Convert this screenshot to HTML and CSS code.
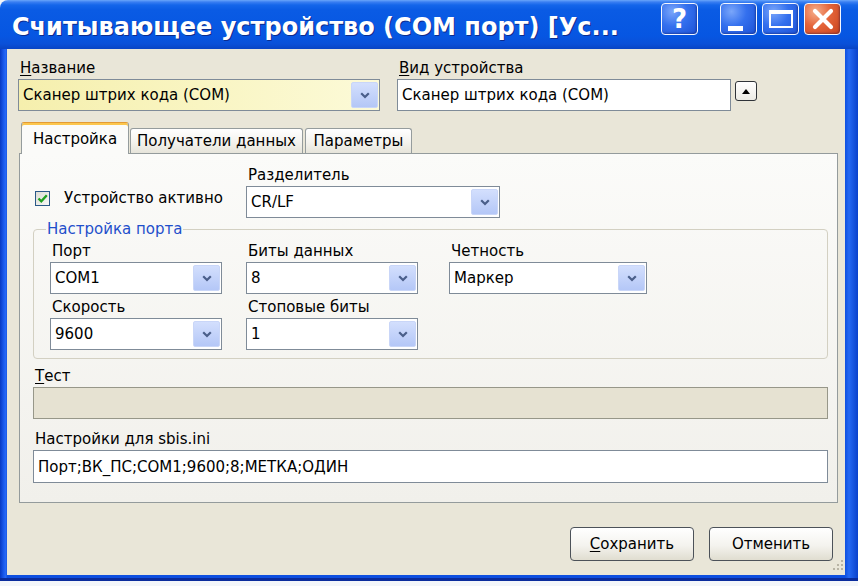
FILE: index.html
```html
<!DOCTYPE html>
<html lang="ru">
<head>
<meta charset="utf-8">
<title>Считывающее устройство (COM порт)</title>
<link rel="stylesheet" href="styles.css">
</head>
<body>
<div class="window">
  <div class="titlebar">
    <div class="title">Считывающее устройство (COM порт) [Ус...</div>
    <div class="caption-buttons">
      <div class="cap-btn help">?</div>
      <div class="cap-btn min"><span class="min-bar"></span></div>
      <div class="cap-btn max"><span class="max-box"></span></div>
      <div class="cap-btn close">
        <svg width="24" height="22" viewBox="0 0 24 22"><path d="M4 3 L20 19 M20 3 L4 19" stroke="#fff" stroke-width="4.2" stroke-linecap="round"/></svg>
      </div>
    </div>
  </div>
  <div class="frame">
    <div class="client">
      <div class="top-row">
        <div class="field name-field">
          <span class="lbl"><u>Н</u>азвание</span>
          <div class="combo yellow">
            <span class="val">Сканер штрих кода (COM)</span>
            <span class="dd"><svg width="10" height="7" viewBox="0 0 10 7"><path d="M1.2 1.2 L5 5 L8.8 1.2" stroke="#4a5f8a" stroke-width="2.2" fill="none"/></svg></span>
          </div>
        </div>
        <div class="field kind-field">
          <span class="lbl"><u>В</u>ид устройства</span>
          <div class="kind-row">
            <div class="textbox kind-box">Сканер штрих кода (COM)</div>
            <div class="mini-btn"><svg width="8" height="5" viewBox="0 0 8 5"><polygon points="0,5 4,0 8,5" fill="#000"/></svg></div>
          </div>
        </div>
      </div>

      <div class="tabs">
        <div class="tab active t1">Настройка</div>
        <div class="tab t2">Получатели данных</div>
        <div class="tab t3">Параметры</div>
      </div>

      <div class="panel">
        <div class="row-a">
          <div class="check">
            <span class="box"><svg width="13" height="13" viewBox="0 0 13 13"><path d="M2.5 6.5 L5.3 9.3 L10.8 3.3" stroke="#21a121" stroke-width="2.4" fill="none"/></svg></span>
            <span>Устройство активно</span>
          </div>
          <div class="field">
            <span class="lbl">Разделитель</span>
            <div class="combo w-sep">
              <span class="val">CR/LF</span>
              <span class="dd"><svg width="10" height="7" viewBox="0 0 10 7"><path d="M1.2 1.2 L5 5 L8.8 1.2" stroke="#4a5f8a" stroke-width="2.2" fill="none"/></svg></span>
            </div>
          </div>
        </div>

        <fieldset class="group">
          <legend>Настройка порта</legend>
          <div class="group-grid">
            <div class="field">
              <span class="lbl">Порт</span>
              <div class="combo w-s">
                <span class="val">COM1</span>
                <span class="dd"><svg width="10" height="7" viewBox="0 0 10 7"><path d="M1.2 1.2 L5 5 L8.8 1.2" stroke="#4a5f8a" stroke-width="2.2" fill="none"/></svg></span>
              </div>
            </div>
            <div class="field">
              <span class="lbl">Биты данных</span>
              <div class="combo w-s">
                <span class="val">8</span>
                <span class="dd"><svg width="10" height="7" viewBox="0 0 10 7"><path d="M1.2 1.2 L5 5 L8.8 1.2" stroke="#4a5f8a" stroke-width="2.2" fill="none"/></svg></span>
              </div>
            </div>
            <div class="field">
              <span class="lbl">Четность</span>
              <div class="combo w-l">
                <span class="val">Маркер</span>
                <span class="dd"><svg width="10" height="7" viewBox="0 0 10 7"><path d="M1.2 1.2 L5 5 L8.8 1.2" stroke="#4a5f8a" stroke-width="2.2" fill="none"/></svg></span>
              </div>
            </div>
            <div class="field">
              <span class="lbl">Скорость</span>
              <div class="combo w-s">
                <span class="val">9600</span>
                <span class="dd"><svg width="10" height="7" viewBox="0 0 10 7"><path d="M1.2 1.2 L5 5 L8.8 1.2" stroke="#4a5f8a" stroke-width="2.2" fill="none"/></svg></span>
              </div>
            </div>
            <div class="field">
              <span class="lbl">Стоповые биты</span>
              <div class="combo w-s">
                <span class="val">1</span>
                <span class="dd"><svg width="10" height="7" viewBox="0 0 10 7"><path d="M1.2 1.2 L5 5 L8.8 1.2" stroke="#4a5f8a" stroke-width="2.2" fill="none"/></svg></span>
              </div>
            </div>
          </div>
        </fieldset>

        <span class="lbl lbl-test"><u>Т</u>ест</span>
        <div class="textbox disabled test-box"></div>

        <span class="lbl lbl-ini">Настройки для sbis.ini</span>
        <div class="textbox ini-box">Порт;ВК_ПС;COM1;9600;8;МЕТКА;ОДИН</div>
      </div>

      <div class="btns">
        <div class="btn"><span><u>С</u>охранить</span></div>
        <div class="btn"><span>Отменить</span></div>
      </div>

      <svg class="grip" width="12" height="12" viewBox="0 0 12 12">
        <rect x="9" y="1" width="2" height="2" fill="#b8b4a4"/>
        <rect x="5" y="5" width="2" height="2" fill="#b8b4a4"/>
        <rect x="9" y="5" width="2" height="2" fill="#b8b4a4"/>
        <rect x="1" y="9" width="2" height="2" fill="#b8b4a4"/>
        <rect x="5" y="9" width="2" height="2" fill="#b8b4a4"/>
        <rect x="9" y="9" width="2" height="2" fill="#b8b4a4"/>
      </svg>
    </div>
  </div>
</div>
</body>
</html>
```

FILE: styles.css
```css
* { box-sizing: border-box; }

html, body {
  margin: 0;
  padding: 0;
  background: #f3f6fa;
}

body {
  font-family: "DejaVu Sans", Tahoma, sans-serif;
  font-size: 15px;
  color: #000;
}

u { text-decoration: underline; text-underline-offset: 2px; }

.window {
  width: 858px;
  height: 581px;
  display: flex;
  flex-direction: column;
  border-top-left-radius: 8px;
  overflow: hidden;
}

/* ---------- title bar ---------- */
.titlebar {
  height: 49px;
  flex: none;
  display: flex;
  align-items: flex-start;
  padding: 0 17px 0 12px;
  background: linear-gradient(to bottom,
    #6aa6fa 0px, #3a7ff2 2px, #1466ea 5px, #0a5be4 10px,
    #0656e2 36px, #0a50d8 44px, #0944c4 49px);
}

.title {
  margin-top: 13px;
  line-height: 28px;
  font-family: "DejaVu Sans", sans-serif;
  font-weight: bold;
  font-size: 24px;
  color: #fff;
  white-space: nowrap;
  text-shadow: 1px 1px 0 #0c2c8e;
}

.caption-buttons {
  margin-left: auto;
  margin-top: 3px;
  display: flex;
  gap: 5px;
}

.cap-btn {
  width: 37px;
  height: 32px;
  border: 1.5px solid #f4f7ff;
  border-radius: 4px;
  display: flex;
  align-items: center;
  justify-content: center;
  background: radial-gradient(circle at 30% 25%, #7aa6fa 0%, #3470ee 45%, #1c52d6 100%);
  box-shadow: inset -1px -1px 2px rgba(0, 10, 70, 0.35);
}

.cap-btn.help {
  margin-right: 17px;
  color: #fff;
  font-weight: bold;
  font-size: 26px;
  line-height: 1;
}

.cap-btn.min {
  justify-content: flex-start;
  align-items: flex-end;
  padding: 0 0 3px 7px;
}

.min-bar {
  width: 15px;
  height: 5px;
  background: #fff;
}

.max-box {
  width: 24px;
  height: 18px;
  border: 2px solid #fff;
  border-top-width: 4px;
}

.cap-btn.close {
  background: radial-gradient(circle at 30% 25%, #f6ae8c 0%, #e4643a 45%, #c8431e 100%);
}

/* ---------- frame ---------- */
.frame {
  flex: 1;
  display: flex;
  padding: 0 13px 6px 7px;
  background: linear-gradient(to right,
    #0638c2 0px, #1a5cf0 4px, #2a6af4 6px, #0d4fe0 7px,
    #0d4fe0 calc(100% - 13px), #2468f2 calc(100% - 9px), #0a42cc 100%);
  box-shadow: inset 0 -3px 0 #0a2c9c;
}

.client {
  flex: 1;
  position: relative;
  display: flex;
  flex-direction: column;
  padding: 9px 7px 0 11px;
  background: #e9e6d8;
}

/* ---------- fields ---------- */
.lbl {
  display: block;
  height: 20px;
  line-height: 20px;
  padding-left: 2px;
  white-space: nowrap;
}

.combo,
.textbox {
  margin-top: 1px;
  height: 32px;
  border: 1px solid #7f8b98;
  background: #fff;
  display: flex;
  align-items: center;
  padding-left: 4px;
  white-space: nowrap;
}

.combo .val { flex: 1; }

.dd {
  flex: none;
  width: 27px;
  height: 26px;
  margin-right: 1px;
  border-radius: 2px;
  border: 1px solid #c9d6f8;
  background: linear-gradient(to bottom, #d3dffd, #b4c7f7);
  display: flex;
  align-items: center;
  justify-content: center;
}

.combo.yellow {
  background: linear-gradient(to right, #f5efad 0%, #f9f5c2 50%, #fcfad8 100%);
}

.top-row {
  display: flex;
  gap: 17px;
}

.name-field { width: 362px; }

.kind-row {
  display: flex;
  align-items: flex-start;
  gap: 4px;
}

.kind-box { width: 334px; }

.mini-btn {
  margin-top: 3px;
  width: 22px;
  height: 20px;
  border: 1px solid #2f3338;
  border-radius: 3px;
  background: linear-gradient(#ffffff, #ecebe4);
  display: flex;
  align-items: center;
  justify-content: center;
}

/* ---------- tabs ---------- */
.tabs {
  margin-top: 11px;
  margin-left: 3px;
  height: 31px;
  display: flex;
  align-items: flex-end;
}

.tab {
  height: 25px;
  display: flex;
  align-items: center;
  justify-content: center;
  white-space: nowrap;
  border: 1px solid #959c9d;
  border-bottom: none;
  border-radius: 3px 3px 0 0;
  background: linear-gradient(to bottom, #ffffff 0%, #f4f3ee 55%, #e6e4da 100%);
}

.tab.active {
  position: relative;
  z-index: 2;
  height: 32px;
  margin-bottom: -1px;
  border-top: 1px solid #e39a34;
  box-shadow: inset 0 2px 0 #fcc64c;
  background: #fbfbf9;
  padding-top: 1px;
}

.t1 { width: 108px; }
.t2 { width: 173px; margin-left: 1px; }
.t3 { width: 107px; margin-left: 2px; }

/* ---------- panel ---------- */
.panel {
  width: 819px;
  margin-left: 1px;
  border: 1px solid #949b9c;
  background: linear-gradient(to bottom, #fbfbf9, #f1f0eb);
  padding: 11px 9px 19px 13px;
  display: flex;
  flex-direction: column;
}

.row-a {
  display: grid;
  grid-template-columns: 213px 254px;
}

.check {
  align-self: end;
  margin: 0 0 11px 2px;
  display: flex;
  align-items: center;
  white-space: nowrap;
}

.box {
  width: 15px;
  height: 15px;
  margin-right: 14px;
  border: 1px solid #2a5888;
  background: linear-gradient(135deg, #dcdcd4, #f8f8f6);
  display: flex;
  align-items: center;
  justify-content: center;
}

.group {
  margin: 3px 0 0 0;
  padding: 4px 0 8px 16px;
  border: 1px solid #d3d0c2;
  border-radius: 4px;
  min-inline-size: 0;
}

.group legend {
  margin-left: -4px;
  padding: 0 1px;
  line-height: 16px;
  color: #1f4fcb;
}

.group-grid {
  display: grid;
  grid-template-columns: 196px 203px 198px;
  row-gap: 3px;
}

.w-s { width: 172px; }
.w-l { width: 198px; }
.w-sep { width: 254px; }

.lbl-test { margin-top: 7px; }

.textbox.disabled {
  background: #e6e2d2;
  border-color: #979789;
}

.lbl-ini { margin-top: 10px; }

.ini-box { height: 33px; }

/* ---------- buttons ---------- */
.btns {
  margin-top: 24px;
  margin-right: 5px;
  display: flex;
  justify-content: flex-end;
  gap: 15px;
}

.btn {
  width: 124px;
  height: 34px;
  border: 1px solid #4c5259;
  border-radius: 4px;
  background: linear-gradient(to bottom, #ffffff 0%, #f4f3ee 55%, #e0ddd0 100%);
  display: flex;
  align-items: center;
  justify-content: center;
}

.grip {
  position: absolute;
  right: 1px;
  bottom: 4px;
}
```
